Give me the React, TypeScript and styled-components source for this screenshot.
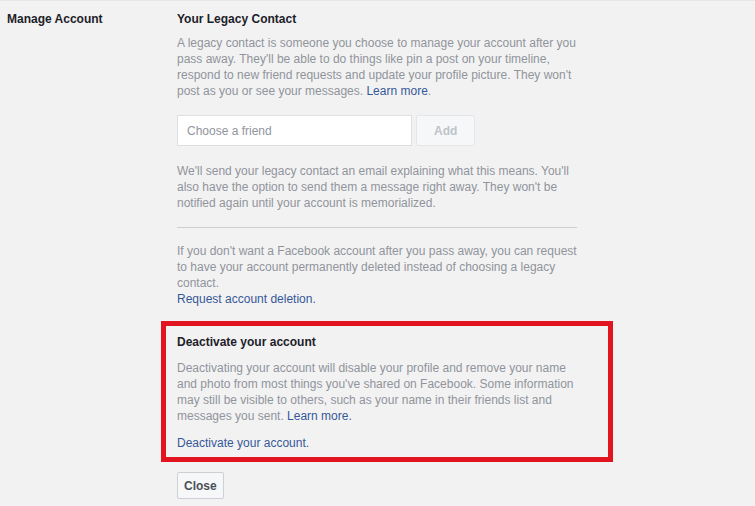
import React from "react";
import styled, { createGlobalStyle } from "styled-components";

const GlobalStyle = createGlobalStyle`
  html, body {
    margin: 0;
    padding: 0;
    background: #f2f2f2;
  }
  body {
    font-family: "Liberation Sans", Arial, Helvetica, sans-serif;
    font-size: 12px;
    color: #1d2129;
  }
`;

const Page = styled.main`
  display: grid;
  grid-template-columns: 170px 400px;
  padding: 10px 0 0 7px;
  border-top: 1px solid #e6e6e6;
  min-height: 505px;
  box-sizing: border-box;
`;

const Label = styled.div`
  font-weight: bold;
  line-height: 16px;
`;

const Content = styled.section`
  display: flex;
  flex-direction: column;
`;

const Title = styled.h3`
  margin: 0;
  font-size: 12px;
  font-weight: bold;
  line-height: 16px;
  color: #1d2129;
`;

const Text = styled.p<{ $top?: number }>`
  margin: ${(p) => p.$top ?? 0}px 0 0;
  line-height: 16px;
  color: #90949c;
`;

const Link = styled.a`
  color: #365899;
  text-decoration: none;
  cursor: pointer;
`;

const FriendRow = styled.div`
  display: flex;
  gap: 4px;
  margin-top: 16px;
`;

const FriendInput = styled.input`
  box-sizing: border-box;
  width: 235px;
  height: 31px;
  padding: 0 9px;
  border: 1px solid #dddfe2;
  background: #fff;
  font-family: inherit;
  font-size: 12px;
  color: #1d2129;
  outline: none;
  &::placeholder {
    color: #90949c;
  }
`;

const Button = styled.button<{ $disabled?: boolean }>`
  box-sizing: border-box;
  height: ${(p) => (p.$disabled ? 31 : 27)}px;
  padding: 0 ${(p) => (p.$disabled ? 17 : 6)}px;
  border: 1px solid ${(p) => (p.$disabled ? "#e4e6e9" : "#ced0d4")};
  border-radius: 2px;
  background: #f6f7f9;
  font-family: inherit;
  font-size: 12px;
  font-weight: bold;
  color: ${(p) => (p.$disabled ? "#bec3c9" : "#4b4f56")};
`;

const Divider = styled.hr`
  margin: 16px 0 0;
  border: 0;
  border-top: 1px solid #ccd0d5;
`;

const Highlight = styled.div`
  box-sizing: border-box;
  width: 452px;
  margin: 14px 0 0 -16px;
  padding: 8px 31px 6px 11px;
  border: 5px solid #e2141f;
`;

const Footer = styled.div`
  margin-top: 10px;
`;

export default function App() {
  return (
    <>
      <GlobalStyle />
      <Page>
        <Label>Manage Account</Label>
        <Content>
          <Title>Your Legacy Contact</Title>
          <Text $top={8}>
            A legacy contact is someone you choose to manage your account after you
            pass away. They'll be able to do things like pin a post on your timeline,
            respond to new friend requests and update your profile picture. They won't
            post as you or see your messages. <Link>Learn more</Link>.
          </Text>
          <FriendRow>
            <FriendInput placeholder="Choose a friend" />
            <Button $disabled>Add</Button>
          </FriendRow>
          <Text $top={17}>
            We'll send your legacy contact an email explaining what this means. You'll
            also have the option to send them a message right away. They won't be
            notified again until your account is memorialized.
          </Text>
          <Divider />
          <Text $top={15}>
            If you don't want a Facebook account after you pass away, you can request
            to have your account permanently deleted instead of choosing a legacy
            contact.
            <br />
            <Link>Request account deletion.</Link>
          </Text>
          <Highlight>
            <Title>Deactivate your account</Title>
            <Text $top={10}>
              Deactivating your account will disable your profile and remove your name
              and photo from most things you've shared on Facebook. Some information
              may still be visible to others, such as your name in their friends list
              and messages you sent. <Link>Learn more.</Link>
            </Text>
            <Text $top={11}>
              <Link>Deactivate your account.</Link>
            </Text>
          </Highlight>
          <Footer>
            <Button>Close</Button>
          </Footer>
        </Content>
      </Page>
    </>
  );
}
